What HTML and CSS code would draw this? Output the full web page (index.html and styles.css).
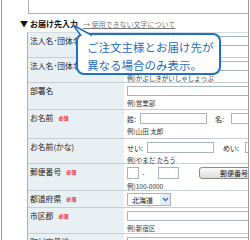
FILE: index.html
```html
<!DOCTYPE html>
<html lang="ja">
<head>
<meta charset="utf-8">
<link rel="stylesheet" href="styles.css">
</head>
<body>
<div class="frame">
  <div class="prev-box"></div>
  <div class="heading">
    <span class="tri">▼</span><b class="title">お届け先入力</b><a class="link">→ 使用できない文字について</a>
  </div>
  <div class="form">
    <div class="row h25">
      <div class="label">法人名･団体名</div>
      <div class="value"><span class="input full"></span><span class="note">例)株式会社ショップ</span></div>
    </div>
    <div class="row h25">
      <div class="label">法人名･団体名(かな)</div>
      <div class="value"><span class="input full"></span><span class="note">例)かぶしきがいしゃしょっぷ</span></div>
    </div>
    <div class="row h27">
      <div class="label">部署名</div>
      <div class="value"><span class="input full"></span><span class="note">例)営業部</span></div>
    </div>
    <div class="row h29">
      <div class="label">お名前<span class="req">必須</span></div>
      <div class="value">
        <div class="line"><span class="pre p13">姓:</span><span class="input w67"></span><span class="pre p16 gap8">名:</span><span class="input w40"></span></div>
        <span class="note">例)山田 太郎</span>
      </div>
    </div>
    <div class="row h25">
      <div class="label">お名前(かな)</div>
      <div class="value">
        <div class="line"><span class="pre p20">せい:</span><span class="input w67"></span><span class="pre p22 gap9">めい:</span><span class="input w40"></span></div>
        <span class="note">例)やまだ たろう</span>
      </div>
    </div>
    <div class="row h27">
      <div class="label">郵便番号<span class="req">必須</span></div>
      <div class="value">
        <div class="line"><span class="input w12"></span><span class="dash">-</span><span class="input w21"></span><span class="btn">郵便番号から住所を検索</span></div>
        <span class="note">例)100-0000</span>
      </div>
    </div>
    <div class="row h17">
      <div class="label">都道府県<span class="req">必須</span></div>
      <div class="value"><span class="select">北海道<span class="arrow"><svg width="7" height="5" viewBox="0 0 7 5"><path d="M1 1l2.5 2.5L6 1" fill="none" stroke="#3a6fb0" stroke-width="1.3"/></svg></span></span></div>
    </div>
    <div class="row h26">
      <div class="label">市区郡<span class="req">必須</span></div>
      <div class="value"><span class="input full"></span><span class="note">例)新宿区</span></div>
    </div>
    <div class="row h26">
      <div class="label">町村字番地<span class="req">必須</span></div>
      <div class="value"><span class="input full"></span></div>
    </div>
  </div>
  <div class="callout">
    <svg class="tail" width="22" height="12" viewBox="0 0 22 12"><path d="M9 11.5 L1 1 L20 11.5" fill="#fff" stroke="#1f6fc4" stroke-width="1.6" stroke-linejoin="miter"/></svg>
    <p>ご注文主様とお届け先が<br>異なる場合のみ表示。</p>
  </div>
</div>
</body>
</html>
```
FILE: styles.css
```css
html, body { margin: 0; padding: 0; background: #fff; }
body { font-family: "Noto Sans CJK JP", "Noto Sans", sans-serif; color: #222; }
.frame {
  position: relative;
  margin-left: 1px;
  width: 246px;
  height: 240px;
  border-left: 1px solid #9a9a9a;
  border-right: 1px solid #9a9a9a;
  overflow: hidden;
}
.prev-box {
  margin-left: 26px;
  height: 13px;
  border-left: 1px solid #b0b0b0;
  border-bottom: 1px solid #b0b0b0;
}
.heading {
  display: flex;
  align-items: center;
  height: 17px;
  padding-left: 18px;
  padding-top: 1px;
}
.tri { font-size: 8px; width: 10px; color: #111; }
.title { font-size: 8px; font-weight: bold; color: #111; }
.link { font-size: 7px; color: #777; text-decoration: underline; margin-left: 5px; }
.form {
  margin-left: 25px;
  border-left: 1px solid #b0b0b0;
  border-top: 1px solid #d5dde4;
}
.row { display: flex; border-bottom: 1px solid #c8cdd2; box-sizing: border-box; }
.h25 { height: 25px; } .h27 { height: 27px; } .h29 { height: 29px; } .h17 { height: 17px; } .h26 { height: 26px; }
.label {
  width: 97px;
  flex: none;
  background: #e9f0f4;
  font-size: 7.8px;
  padding: 2px 0 0 2px;
  box-sizing: border-box;
  white-space: nowrap;
  border-right: 1px solid #fff;
  overflow: hidden;
}
.req { color: #e8262b; font-size: 5px; font-weight: bold; margin-left: 5px; vertical-align: 1px; }
.value { flex: 1; padding: 3px 0 0 2px; display: flex; flex-direction: column; align-items: flex-start; min-width: 0; }
.input { display: block; flex: none; height: 10px; border: 1px solid #a7b5c2; background: #fff; box-sizing: border-box; }
.full { width: 130px; }
.note { font-size: 6.5px; color: #333; margin-top: 2px; white-space: nowrap; }
.line { display: flex; align-items: center; white-space: nowrap; }
.pre { font-size: 7px; flex: none; }
.p13 { width: 13px; } .p16 { width: 16px; } .p20 { width: 20px; } .p22 { width: 22px; }
.gap8 { margin-left: 8px; } .gap9 { margin-left: 9px; }
.w67 { width: 67px; height: 11px; }
.w40 { width: 40px; height: 11px; }
.w12 { width: 12px; height: 12px; }
.w21 { width: 21px; height: 12px; }
.dash { font-size: 7px; width: 19px; flex: none; padding-left: 3px; box-sizing: border-box; }
.btn {
  margin-left: 20px;
  flex: none;
  height: 12px;
  font-size: 7px;
  line-height: 10px;
  padding: 0 8px 0 20px;
  border: 1px solid #8a8a8a;
  border-radius: 3px;
  background: linear-gradient(#fafafa, #dcdcdc);
  box-sizing: border-box;
}
.select {
  display: flex;
  align-items: center;
  width: 44px;
  height: 13px;
  margin-top: -1px;
  border: 1px solid #a7b5c2;
  background: #fff;
  font-size: 7px;
  padding-left: 4px;
  box-sizing: border-box;
  justify-content: space-between;
}
.arrow { display: flex; align-items: center; justify-content: center; width: 10px; height: 11px; background: #e4ecf4; }
.callout {
  position: absolute;
  left: 74px;
  top: 33px;
  width: 145px;
  height: 42px;
  box-sizing: border-box;
  border: 2px solid #1f6fc4;
  border-radius: 8px;
  background: #fff;
}
.tail { position: absolute; left: -6px; top: -11px; }
.callout p {
  margin: 0;
  padding: 3px 0 0 9px;
  font-size: 11.5px;
  line-height: 18px;
  color: #1f6fc4;
  white-space: nowrap;
}
```
